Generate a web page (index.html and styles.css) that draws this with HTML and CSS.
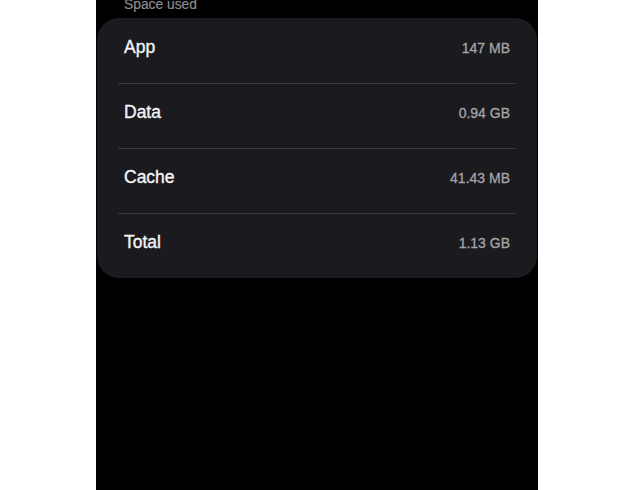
FILE: index.html
```html
<!DOCTYPE html>
<html>
<head>
<meta charset="utf-8">
<link rel="stylesheet" href="styles.css">
</head>
<body>
<div class="screen">
  <div class="section-title"><span>Space used</span></div>
  <div class="card">
    <div class="row"><span class="label">App</span><span class="value">147 MB</span></div>
    <div class="row"><span class="label">Data</span><span class="value">0.94 GB</span></div>
    <div class="row"><span class="label">Cache</span><span class="value">41.43 MB</span></div>
    <div class="row last"><span class="label">Total</span><span class="value">1.13 GB</span></div>
  </div>
</div>
</body>
</html>
```
FILE: styles.css
```css
html, body {
  margin: 0;
  padding: 0;
  background: #ffffff;
  height: 100%;
  overflow: hidden;
}
body {
  font-family: "Liberation Sans", Arial, sans-serif;
}
.screen {
  margin-left: 96px;
  width: 442px;
  height: 490px;
  background: #000000;
  padding: 0 1px;
  box-sizing: border-box;
}
.section-title {
  height: 18px;
  padding-left: 27px;
  overflow: hidden;
}
.section-title span {
  display: block;
  margin-top: -3px;
  font-size: 13.8px;
  line-height: 15px;
  color: #8b8b8f;
  -webkit-text-stroke: 0.2px #8b8b8f;
}
.card {
  background: #1b1a1e;
  border-radius: 22px;
  padding-top: 1px;
}
.row {
  display: flex;
  justify-content: space-between;
  align-items: baseline;
  margin: 0 21px;
  padding: 17px 6px 0;
  height: 65px;
  box-sizing: border-box;
  border-bottom: 1px solid #39383c;
}
.row.last {
  border-bottom: none;
  height: 64px;
}
.label {
  font-size: 17.5px;
  line-height: 22px;
  color: #f4f4f6;
  -webkit-text-stroke: 0.35px #f4f4f6;
}
.value {
  font-size: 14px;
  line-height: 18px;
  color: #a4a4a8;
  -webkit-text-stroke: 0.3px #a4a4a8;
}
```
